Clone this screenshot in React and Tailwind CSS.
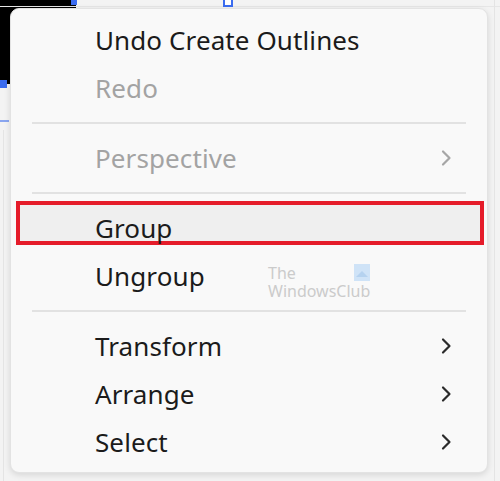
import React from "react";

function Chevron({ disabled }) {
  return (
    <svg width="12" height="18" viewBox="0 0 12 18" className="ml-auto mr-[35px]">
      <path d="M3 2.5 L9.5 9 L3 15.5" fill="none" stroke={disabled ? "#a6a6a6" : "#2b2b2b"} strokeWidth="2.2" strokeLinecap="round" strokeLinejoin="round" />
    </svg>
  );
}

function Item({ label, disabled, sub, children }) {
  return (
    <div className="relative h-[48px] flex items-center pl-[84px]">
      {children}
      <span className={"relative text-[26px] leading-none tracking-[0.1px] " + (disabled ? "text-[#a3a3a3]" : "text-[#1b1b1b]")}>{label}</span>
      {sub && <Chevron disabled={disabled} />}
    </div>
  );
}

function Sep() {
  return (
    <div className="h-[22px] flex items-center px-[21px]">
      <div className="h-[2px] w-full bg-[#e2e2e2]" />
    </div>
  );
}

export default function App() {
  return (
    <div
      className="relative w-[500px] h-[481px] overflow-hidden bg-[#f3f3f3]"
      style={{ fontFamily: '"Noto Sans", "Open Sans", sans-serif' }}
    >
      {/* canvas artwork behind the menu */}
      <div className="absolute left-0 top-0 w-[76px] h-[84px] bg-black" />
      <div className="absolute left-0 top-[6px] w-[500px] h-px bg-[#e6e6e6]" />
      <div className="absolute left-[71px] top-0 w-[6px] h-[5px] bg-[#3b6cf0]" />
      <div className="absolute left-[223px] top-[-2px] w-[10px] h-[9px] border-2 border-[#3b6cf0] bg-white" />
      <div className="absolute left-0 top-[80px] w-[7px] h-[8px] bg-[#3b6cf0]" />
      <div className="absolute left-0 top-[120px] w-[9px] h-[2px] bg-[#8aa6f0]" />
      <div className="absolute left-[3px] top-[130px] w-px h-[351px] bg-[#e4e4e4]" />
      <div className="absolute left-[494px] top-0 w-px h-[481px] bg-[#e4e4e4]" />

      <div className="relative ml-[10px] mt-[8px] w-[478px] h-[465px] rounded-[9px] bg-[#f9f9f9] border border-[#e3e3e3] shadow-[0_2px_6px_rgba(0,0,0,0.12)] pt-[7px]">
        <Item label="Undo Create Outlines" />
        <Item label="Redo" disabled />
        <Sep />
        <Item label="Perspective" disabled sub />
        <Sep />
        <Item label="Group">
          <div className="absolute left-[5px] right-[3px] top-[-3px] h-[44px] border-4 border-[#e51c2a] bg-[#efefef]" />
        </Item>
        <Item label="Ungroup">
          <div className="absolute left-[257px] top-[12px] flex items-start">
            <span className="text-[16px] leading-[18px] text-[#cbcbcb]">
              The
              <br />
              WindowsClub
            </span>
            <div className="ml-[-16px] w-[16px] h-[17px] bg-[#cfe3f7] overflow-hidden">
              <svg width="16" height="17" viewBox="0 0 16 17">
                <path d="M2 13 L8 7 L14 13 Z" fill="#b5d2ef" />
              </svg>
            </div>
          </div>
        </Item>
        <Sep />
        <Item label="Transform" sub />
        <Item label="Arrange" sub />
        <Item label="Select" sub />
      </div>
    </div>
  );
}
